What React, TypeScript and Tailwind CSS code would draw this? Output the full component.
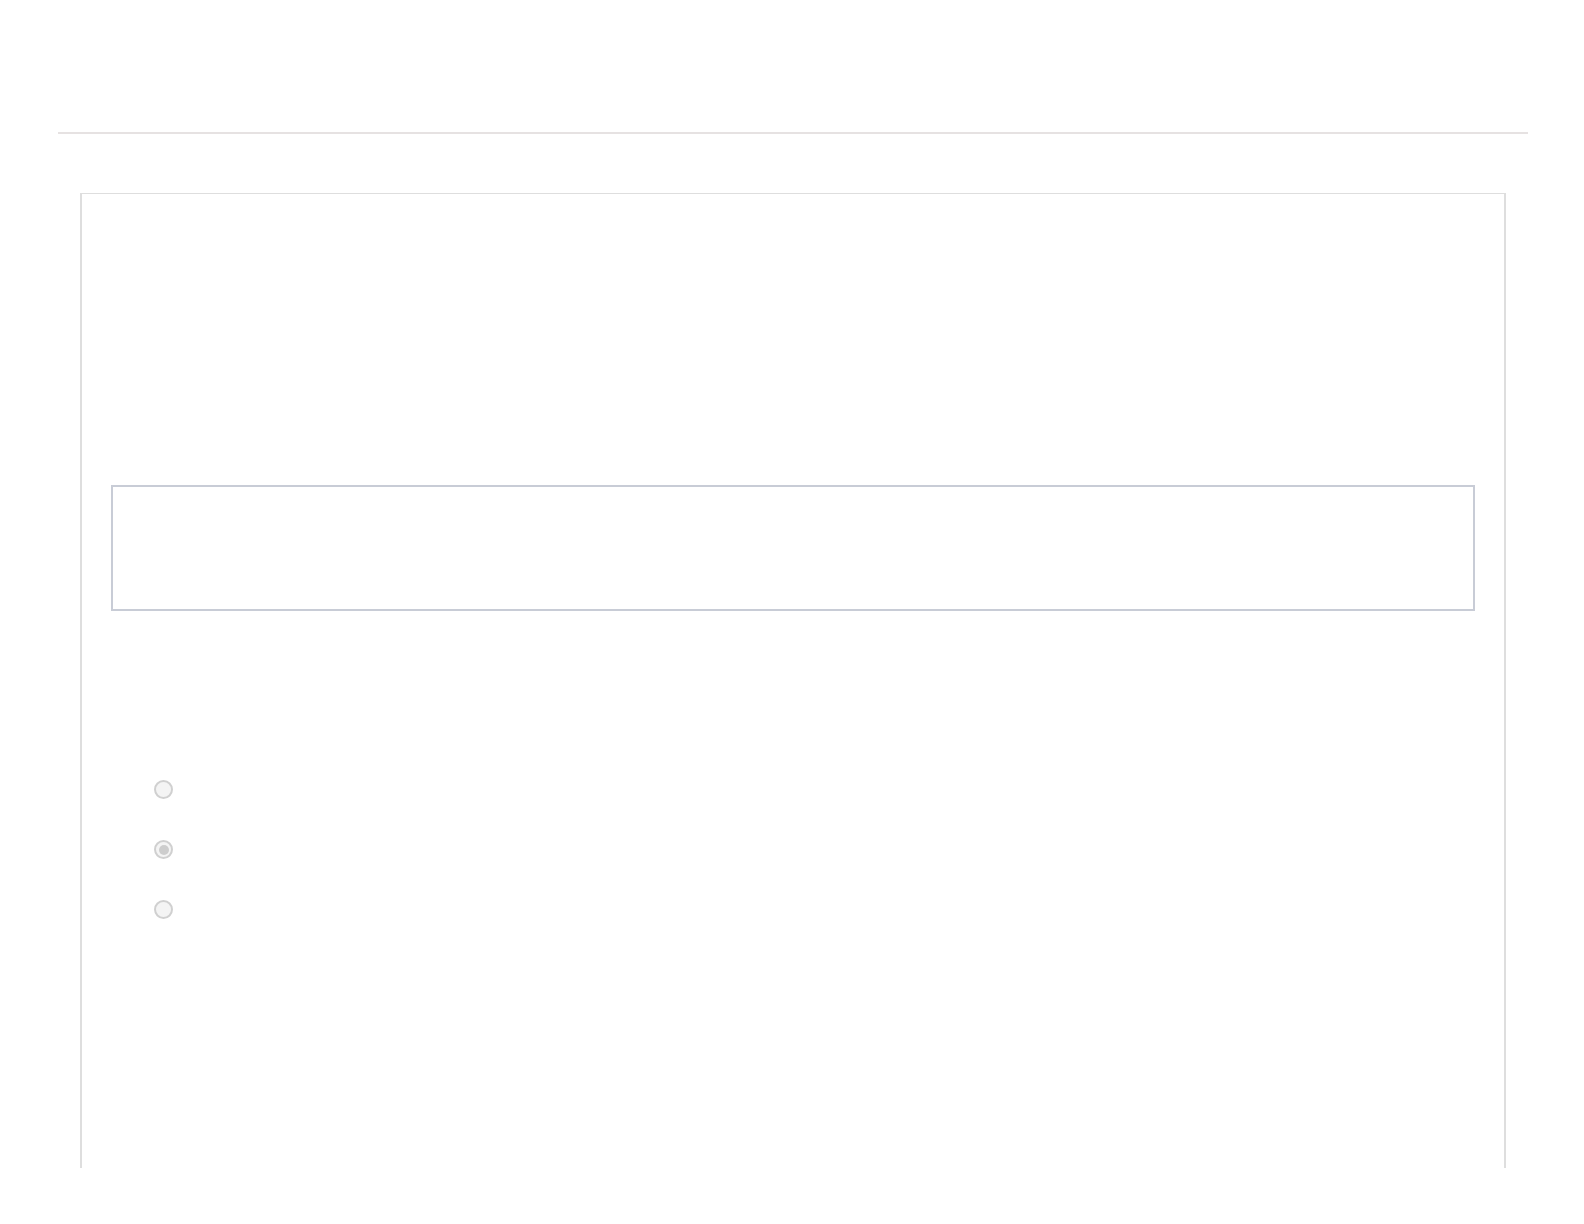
import { useState } from "react";

const options = ["a", "b", "c"];

const Radio = ({ checked, onClick }: { checked: boolean; onClick: () => void }) => (
  <button
    onClick={onClick}
    className="w-[19px] h-[19px] rounded-full border-2 border-[#d0d0d0] bg-[#f4f4f4] flex items-center justify-center"
  >
    {checked && <span className="w-[10px] h-[10px] rounded-full bg-[#cdcdcd]" />}
  </button>
);

export default function App() {
  const [selected, setSelected] = useState(1);

  return (
    <div className="bg-white min-h-screen font-['Liberation_Sans',sans-serif]">
      <div className="pt-[132px] px-[56px]">
        <div className="h-[2px] bg-[#e6e2e2] ml-[2px]" />
        <div className="ml-[24px] mr-[22px] mt-[59px] h-[975px] border-t border-x-2 border-[#dedede] px-[29px] pt-[291px]">
          <div className="h-[126px] border-2 border-[#c8ccd6] bg-white" />
          <div className="flex flex-col gap-[41px] mt-[169px] pl-[43px]">
            {options.map((o, i) => (
              <div key={o} className="flex items-center h-[19px]">
                <Radio checked={selected === i} onClick={() => setSelected(i)} />
              </div>
            ))}
          </div>
        </div>
      </div>
    </div>
  );
}
